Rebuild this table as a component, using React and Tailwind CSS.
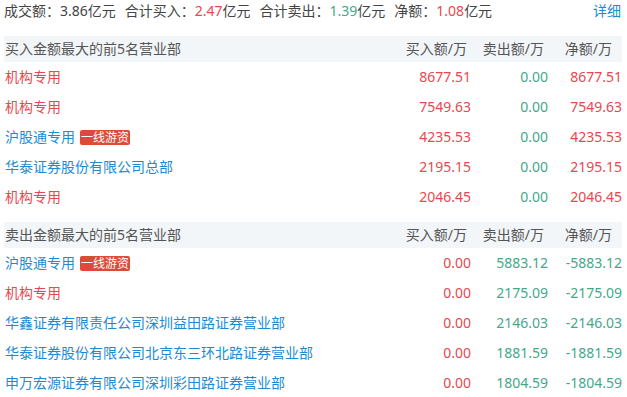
import React from "react";

const RED = "text-[#e9474f]";
const GREEN = "text-[#45a88a]";
const BLUE = "text-[#1c8bd3]";

const buyRows = [
  { name: "机构专用", color: RED, buy: "8677.51", sell: "0.00", net: "8677.51" },
  { name: "机构专用", color: RED, buy: "7549.63", sell: "0.00", net: "7549.63" },
  { name: "沪股通专用", color: BLUE, tag: "一线游资", buy: "4235.53", sell: "0.00", net: "4235.53" },
  { name: "华泰证券股份有限公司总部", color: BLUE, buy: "2195.15", sell: "0.00", net: "2195.15" },
  { name: "机构专用", color: RED, buy: "2046.45", sell: "0.00", net: "2046.45" },
];

const sellRows = [
  { name: "沪股通专用", color: BLUE, tag: "一线游资", buy: "0.00", sell: "5883.12", net: "-5883.12" },
  { name: "机构专用", color: RED, buy: "0.00", sell: "2175.09", net: "-2175.09" },
  { name: "华鑫证券有限责任公司深圳益田路证券营业部", color: BLUE, buy: "0.00", sell: "2146.03", net: "-2146.03" },
  { name: "华泰证券股份有限公司北京东三环北路证券营业部", color: BLUE, buy: "0.00", sell: "1881.59", net: "-1881.59" },
  { name: "申万宏源证券有限公司深圳彩田路证券营业部", color: BLUE, buy: "0.00", sell: "1804.59", net: "-1804.59" },
];

function Section({ title, rows, isBuy }) {
  return (
    <div>
      <div className="flex items-center h-[26px] bg-[#f3f6f9] text-[#555]">
        <div className="flex-1 pl-[1px]">{title}</div>
        <div className="w-[77px] text-right pr-[4px]">买入额/万</div>
        <div className="w-[77px] text-right pr-[4px]">卖出额/万</div>
        <div className="w-[74px] text-right pr-[10px]">净额/万</div>
      </div>
      {rows.map((r, i) => (
        <div key={i} className="flex items-center h-[30px]">
          <div className={`flex-1 flex items-center pl-[1px] ${r.color}`}>
            {r.name}
            {r.tag && (
              <span className="ml-[5px] bg-[#dc4a3a] text-white text-[12px] leading-[15px] px-[1px] rounded-[2px]">
                {r.tag}
              </span>
            )}
          </div>
          <div className={`w-[77px] text-right ${RED}`}>{r.buy}</div>
          <div className={`w-[77px] text-right ${GREEN}`}>{r.sell}</div>
          <div className={`w-[74px] text-right ${isBuy ? RED : GREEN}`}>{r.net}</div>
        </div>
      ))}
    </div>
  );
}

export default function App() {
  return (
    <div
      className="w-[627px] h-[397px] bg-white pl-[4px] pr-[5px] text-[14px] leading-[20px] text-[#444] overflow-hidden"
      style={{ fontFamily: '"Noto Sans", "Noto Sans CJK SC", sans-serif' }}
    >
      <div className="flex items-center h-[22px] mb-[14px]">
        <div className="flex-1 flex gap-[9px]">
          <span>成交额：3.86亿元</span>
          <span>
            合计买入：<span className={RED}>2.47</span>亿元
          </span>
          <span>
            合计卖出：<span className={GREEN}>1.39</span>亿元
          </span>
          <span>
            净额：<span className={RED}>1.08</span>亿元
          </span>
        </div>
        <span className={`${BLUE} pr-[1px]`}>详细</span>
      </div>
      <Section title="买入金额最大的前5名营业部" rows={buyRows} isBuy />
      <div className="h-[10px]" />
      <Section title="卖出金额最大的前5名营业部" rows={sellRows} />
    </div>
  );
}
